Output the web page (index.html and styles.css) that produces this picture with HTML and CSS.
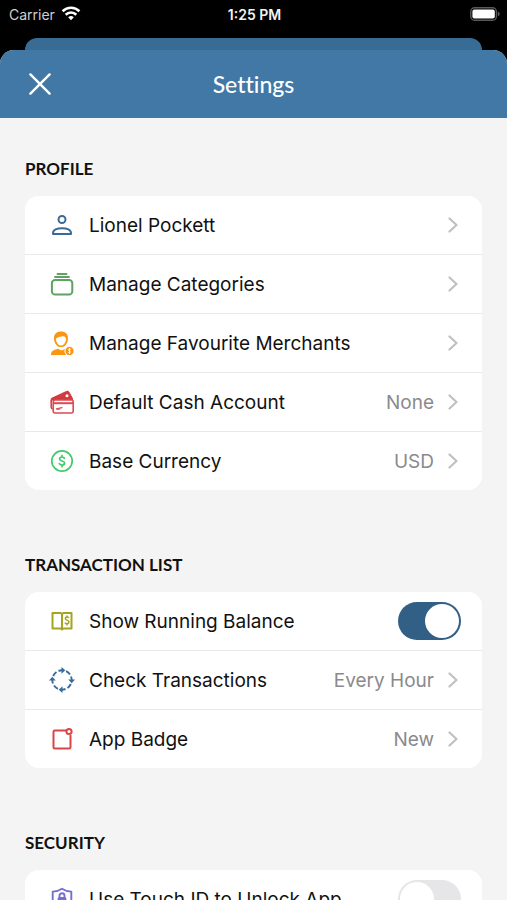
FILE: index.html
```html
<!DOCTYPE html>
<html lang="en">
<head>
    <meta charset="UTF-8">
    <meta name="viewport" content="width=device-width, initial-scale=1.0">
    <title>Settings</title>
    <link rel="stylesheet" href="styles.css">
</head>
<body>

    <!-- Shared symbols -->
    <svg class="symbols" aria-hidden="true">
        <symbol id="chevron" viewBox="0 0 13 16">
            <path d="M1.5 1.5 8.5 8 1.5 14.5" fill="none" stroke="#c0c0c2" stroke-width="2.2" stroke-linecap="round" stroke-linejoin="round"/>
        </symbol>
    </svg>

    <!-- Status bar -->
    <div class="status-bar">
        <div class="carrier">
            <span>Carrier</span>
            <svg width="20" height="16" viewBox="0 0 20 16" fill="none" stroke="#fff" stroke-width="2.6">
                <path d="M1.6 5.2a12 12 0 0 1 16.8 0"/>
                <path d="M4.7 8.7a7.600 7.600 0 0 1 10.600 0"/>
                <path d="M10 14.200 7.200 11.300a4 4 0 0 1 5.600 0Z" fill="#fff" stroke="none"/>
            </svg>
        </div>
        <div class="time">1:25 PM</div>
        <div class="battery">
            <svg width="30" height="14" viewBox="0 0 30 14">
                <rect x=".8" y=".8" width="25.6" height="12.4" rx="3.8" fill="none" stroke="#59595b" stroke-width="1.4"/>
                <rect x="2.4" y="2.4" width="22.4" height="9.2" rx="2" fill="#fff"/>
                <path d="M27.8 4.6q2 1 2 2.4t-2 2.4Z" fill="#59595b"/>
            </svg>
        </div>
    </div>

    <div class="back-sheet"></div>

    <!-- Settings sheet -->
    <main class="sheet">
        <header>
            <button type="button" class="close" aria-label="Close">
                <svg width="22" height="22" viewBox="0 0 22 22" stroke="#fff" stroke-width="2.4" stroke-linecap="round">
                    <path d="M1.4 1.4l19.2 19.2M20.6 1.4 1.4 20.6"/>
                </svg>
            </button>
            <h1>Settings</h1>
        </header>

        <div class="content">
            <section>
                <h2>PROFILE</h2>
                <ul class="card">
                    <li>
                        <a class="row" href="#">
                            <svg class="icon" viewBox="0 0 24 24" fill="none" stroke="#3a6a98" stroke-width="2">
                                <circle cx="12" cy="6.500" r="3.500"/>
                                <path d="M3 21v-.8c0-3.200 4-5 9-5s9 1.800 9 5v.8Z" stroke-linejoin="round"/>
                            </svg>
                            <span class="label">Lionel Pockett</span>
                            <svg class="chevron"><use href="#chevron"/></svg>
                        </a>
                    </li>
                    <li>
                        <a class="row" href="#">
                            <svg class="icon" viewBox="0 0 24 24" fill="none" stroke="#5fa262" stroke-width="2" stroke-linecap="round">
                                <rect x="1.900" y="8" width="20.400" height="14.600" rx="3.200"/>
                                <path d="M5 5h14M7.500 2h9" stroke-width="1.800"/>
                            </svg>
                            <span class="label">Manage Categories</span>
                            <svg class="chevron"><use href="#chevron"/></svg>
                        </a>
                    </li>
                    <li>
                        <a class="row" href="#">
                            <svg class="icon" viewBox="0 0 24 24" fill="#fb9612">
                                <path fill-rule="evenodd" d="M11 .5c4.400 0 7 2.600 7 6.500 0 3-.8 5.200-2.400 6.900-1.400 1.500-2.800 2.200-4.600 2.200s-3.200-.7-4.600-2.200C4.800 12.200 4 10 4 7 4 3.100 6.600.5 11 .5ZM6 7.800c0 3.800 2.300 6.800 5 6.800s5-3 5-6.800c-.8-2.600-2.200-2.800-4.300-2.200C9.300 6.200 7.400 6.200 6 7.800Z"/>
                                <path d="M1 24c0-3.500 2-5 5.800-5.700l1-.8c3 2.600 5.500 2.200 8-.2-1.500 2.200-1.300 4.500.7 6.700Z"/>
                                <circle cx="19.500" cy="20" r="4.600" stroke="#fff"/>
                                <path d="M20.900 18.500q-1.300-.8-2.100-.2c-1 1 .3 1.400 1 1.800 1 .6.600 1.700-.3 1.700q-.8 0-1.300-.5M19.500 17v6" fill="none" stroke="#fff" stroke-width=".9"/>
                            </svg>
                            <span class="label">Manage Favourite Merchants</span>
                            <svg class="chevron"><use href="#chevron"/></svg>
                        </a>
                    </li>
                    <li>
                        <a class="row" href="#">
                            <svg class="icon" viewBox="0 0 24 24">
                                <path d="M1.200 10.500v-2L16.800 1.300q1.400-.6 2.100.8l3.600 6.300V10H1.500Z" fill="#d23a40" stroke="#d23a40" stroke-linejoin="round"/>
                                <circle cx="17" cy="5.800" r="1.500" fill="#fff"/>
                                <path d="M1.200 10v7q0 1.500 1.300 2" fill="none" stroke="#d23a40" stroke-width="1.500"/>
                                <rect x="3.200" y="10" width="20" height="13" rx="2" fill="#fff" stroke="#dd4a50" stroke-width="1.600"/>
                                <path d="M3.200 13.200h20" stroke="#dd4a50" stroke-width="2"/>
                                <path d="M6.500 18.900l5.500-1.300M6.500 19h3" stroke="#dd4a50" stroke-width="1.300" stroke-linecap="round"/>
                            </svg>
                            <span class="label">Default Cash Account</span>
                            <span class="value">None</span>
                            <svg class="chevron"><use href="#chevron"/></svg>
                        </a>
                    </li>
                    <li>
                        <a class="row" href="#">
                            <svg class="icon" viewBox="0 0 24 24" fill="none" stroke="#44ca6a" stroke-width="1.700" stroke-linecap="round">
                                <circle cx="12" cy="12" r="10.200"/>
                                <path d="M14.400 9.300c-.6-1-1.500-1.300-2.500-1.300-1.400 0-2.300.8-2.300 1.900 0 2.700 5 1.400 5 4.200 0 1.200-1.100 2-2.500 2-1.200 0-2.200-.5-2.700-1.500M12 6.400V8M12 16.200v1.500"/>
                            </svg>
                            <span class="label">Base Currency</span>
                            <span class="value">USD</span>
                            <svg class="chevron"><use href="#chevron"/></svg>
                        </a>
                    </li>
                </ul>
            </section>

            <section>
                <h2>TRANSACTION LIST</h2>
                <ul class="card">
                    <li class="row">
                        <svg class="icon" viewBox="0 0 24 24" fill="none" stroke="#a3a51f" stroke-width="2">
                            <path d="M2.500 4h8.200L12 5l1.300-1h8.200v15.500h-8.200L12 20.500l-1.300-1H2.500Z" stroke-linejoin="round"/>
                            <path d="M12 5v16"/>
                            <path d="M18.800 9c-.4-.7-1.100-.9-1.800-.9-1 0-1.700.5-1.700 1.400 0 2 3.600 1.200 3.600 3.600 0 1-.8 1.600-1.900 1.600-.9 0-1.600-.3-2-1.100M17 6.600v1.500M17 14.700v1.700" stroke-width="1.500"/>
                        </svg>
                        <label class="label" for="running-balance">Show Running Balance</label>
                        <input type="checkbox" class="toggle" id="running-balance" checked>
                    </li>
                    <li>
                        <a class="row" href="#">
                            <svg class="icon" viewBox="0 0 24 24" fill="none" stroke="#3a6a98" stroke-width="1.900">
                                <path d="M3.200 8A9.700 9.700 0 0 1 6.500 4M8.500 3A9.700 9.700 0 0 1 12 2.300M16 3.200A9.700 9.700 0 0 1 20 6.500M21 8.500A9.700 9.700 0 0 1 21.700 12M20.800 16A9.700 9.700 0 0 1 17.500 20M15.500 21A9.700 9.700 0 0 1 12 21.700M8 20.800A9.700 9.700 0 0 1 4 17.500M3 15.500A9.700 9.700 0 0 1 2.300 12"/>
                                <path d="M11.500-1 15.300 2.300l-3.800 3.500ZM18.200 11.500H25l-3.300 3.800ZM12.500 18.200V25l-3.800-3.300ZM-1 12.500h6.800L2.300 8.700Z" fill="#3a6a98" stroke="none"/>
                            </svg>
                            <span class="label">Check Transactions</span>
                            <span class="value">Every Hour</span>
                            <svg class="chevron"><use href="#chevron"/></svg>
                        </a>
                    </li>
                    <li>
                        <a class="row" href="#">
                            <svg class="icon" viewBox="0 0 24 24" fill="none" stroke="#dc4545" stroke-width="2">
                                <path d="M16 3.500H4.800q-1.300 0-1.300 1.300v15.400q0 1.300 1.300 1.300h14.400q1.300 0 1.300-1.300V8"/>
                                <circle cx="19" cy="4.500" r="2.600"/>
                            </svg>
                            <span class="label">App Badge</span>
                            <span class="value">New</span>
                            <svg class="chevron"><use href="#chevron"/></svg>
                        </a>
                    </li>
                </ul>
            </section>

            <section>
                <h2>SECURITY</h2>
                <ul class="card">
                    <li class="row">
                        <svg class="icon" viewBox="0 0 24 24" fill="none" stroke="#7670cc" stroke-width="1.900" stroke-linejoin="round">
                            <path d="M12 1.800c3 2 6 2.700 9.300 2.800v7.600c0 5-4 8.500-9.300 10.500-5.300-2-9.300-5.500-9.300-10.500V4.600C6 4.500 9 3.800 12 1.800Z"/>
                            <path d="M9.500 11V8.800a2.500 2.500 0 0 1 5 0V11"/>
                            <rect x="8.500" y="11" width="7" height="5.500" rx="1" fill="#7670cc"/>
                        </svg>
                        <label class="label" for="touch-id">Use Touch ID to Unlock App</label>
                        <input type="checkbox" class="toggle" id="touch-id">
                    </li>
                </ul>
            </section>
        </div>
    </main>

</body>
</html>
```
FILE: styles.css
```css
* {
    box-sizing: border-box;
}

body {
    margin: 0;
    height: 100vh;
    display: flex;
    flex-direction: column;
    background-color: #000;
    color: #111;
    font-family: Inter, "Liberation Sans", sans-serif;
}

.symbols {
    display: none;
}

/* Status bar */
.status-bar {
    display: grid;
    grid-template-columns: 1fr auto 1fr;
    align-items: center;
    flex: none;
    height: 28px;
    padding: 0 7px 0 9px;
    color: #f2f2f2;
    font-size: 14px;
}

.carrier {
    display: flex;
    align-items: center;
    gap: 6px;
    color: #cfcfcf;
}

.time {
    font-weight: 600;
}

.battery {
    display: flex;
    justify-content: flex-end;
}

/* Screen that stays behind the sheet */
.back-sheet {
    flex: none;
    height: 12px;
    margin: 10px 25px 0;
    border-radius: 12px 12px 0 0;
    background-color: #386c94;
}

/* Sheet */
.sheet {
    flex: 1;
    min-height: 0;
    display: flex;
    flex-direction: column;
    overflow: hidden;
    border-radius: 14px 14px 0 0;
    background-color: #f4f4f4;
}

header {
    display: grid;
    grid-template-columns: 1fr auto 1fr;
    align-items: center;
    flex: none;
    height: 68px;
    padding: 0 29px;
    background-color: #4178a6;
    color: #fff;
}

h1 {
    margin: 0;
    font-family: Lato, sans-serif;
    font-size: 23px;
    font-weight: 500;
    font-variant-ligatures: none;
}

.close {
    display: flex;
    justify-self: start;
    padding: 0;
    border: none;
    background: none;
    cursor: pointer;
}

.content {
    flex: 1;
    display: flex;
    flex-direction: column;
    gap: 65px;
    padding: 41px 25px;
    overflow-y: auto;
    scrollbar-width: none;
}

h2 {
    margin: 0 0 17px;
    font-family: Lato, sans-serif;
    font-size: 17px;
    line-height: 20px;
    font-weight: 700;
}

/* Cards and rows */
.card {
    margin: 0;
    padding: 0;
    list-style: none;
    border-radius: 14px;
    background-color: #fff;
}

.card li + li {
    border-top: 1px solid #e9e9e9;
}

.row {
    display: flex;
    align-items: center;
    height: 58px;
    padding: 0 21px 0 25px;
    color: inherit;
    font-size: 19px;
    text-decoration: none;
}

.icon {
    flex: none;
    width: 24px;
    height: 24px;
    margin-right: 15px;
    overflow: visible;
}

.label {
    flex: 1;
    white-space: nowrap;
}

.value {
    color: #8a8a8c;
}

.chevron {
    flex: none;
    width: 13px;
    height: 16px;
    margin-left: 14px;
}

/* Switches */
.toggle {
    appearance: none;
    flex: none;
    display: flex;
    width: 63px;
    height: 38px;
    margin: 0;
    padding: 2px;
    border-radius: 19px;
    background-color: #e6e6e8;
    cursor: pointer;
}

.toggle::before {
    content: "";
    width: 34px;
    height: 34px;
    border-radius: 50%;
    background-color: #fff;
}

.toggle:checked {
    justify-content: flex-end;
    background-color: #315f85;
}
```
